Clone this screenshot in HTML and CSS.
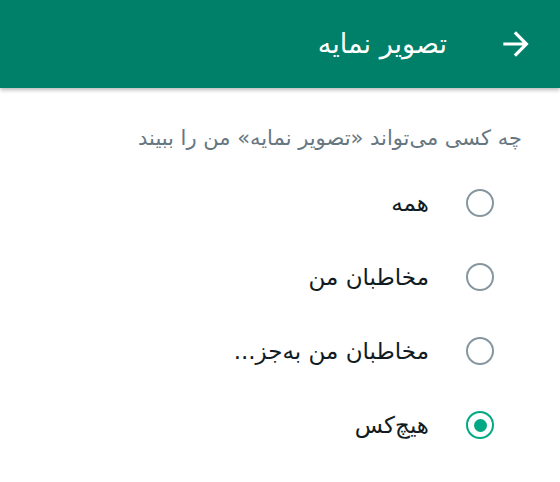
FILE: index.html
```html
<!DOCTYPE html>
<html lang="fa" dir="rtl">
<head>
<meta charset="utf-8">
<link rel="stylesheet" href="styles.css">
</head>
<body>
<header class="appbar">
  <svg class="back" viewBox="0 0 24 24" width="38" height="38"><path fill="#fff" d="M4 11h12.17l-5.59-5.59L12 4l8 8-8 8-1.41-1.41L16.17 13H4v-2z"/></svg>
  <h1 class="title">تصویر نمایه</h1>
</header>
<main class="content">
  <p class="hint">چه کسی می‌تواند «تصویر نمایه» من را ببیند</p>
  <ul class="options">
    <li class="option"><span class="radio"></span><span class="label">همه</span></li>
    <li class="option"><span class="radio"></span><span class="label">مخاطبان من</span></li>
    <li class="option"><span class="radio"></span><span class="label">مخاطبان من به‌جز...</span></li>
    <li class="option"><span class="radio checked"></span><span class="label">هیچ‌کس</span></li>
  </ul>
</main>
</body>
</html>
```
FILE: styles.css
```css
* { box-sizing: border-box; }
html, body { margin: 0; padding: 0; background: #fff; }
body {
  font-family: "DejaVu Sans", "Noto Sans", sans-serif;
  direction: rtl;
  width: 560px;
  height: 482px;
  overflow: hidden;
}
.appbar {
  height: 88px;
  background: #008069;
  display: flex;
  align-items: center;
  padding-right: 25px;
  gap: 50px;
  box-shadow: 0 2px 4px rgba(0,0,0,0.28);
  position: relative;
}
.back { display: block; flex: none; }
.title {
  margin: 0;
  color: #fff;
  font-size: 27px;
  font-weight: normal;
  line-height: 32px;
}
.content { padding-top: 35px; }
.hint {
  margin: 0;
  padding-right: 38px;
  color: #667781;
  font-size: 21px;
  line-height: 30px;
}
.options {
  list-style: none;
  margin: 13px 0 0;
  padding: 0 66px 0 0;
}
.option {
  height: 74px;
  display: flex;
  align-items: center;
  gap: 37px;
}
.radio {
  flex: none;
  width: 28px;
  height: 28px;
  border-radius: 50%;
  border: 2.5px solid #8696a0;
  display: flex;
  align-items: center;
  justify-content: center;
}
.radio.checked { border-color: #00a884; }
.radio.checked::after {
  content: "";
  width: 13px;
  height: 13px;
  border-radius: 50%;
  background: #00a884;
}
.label {
  color: #111b21;
  font-size: 23px;
  line-height: 30px;
}
```
